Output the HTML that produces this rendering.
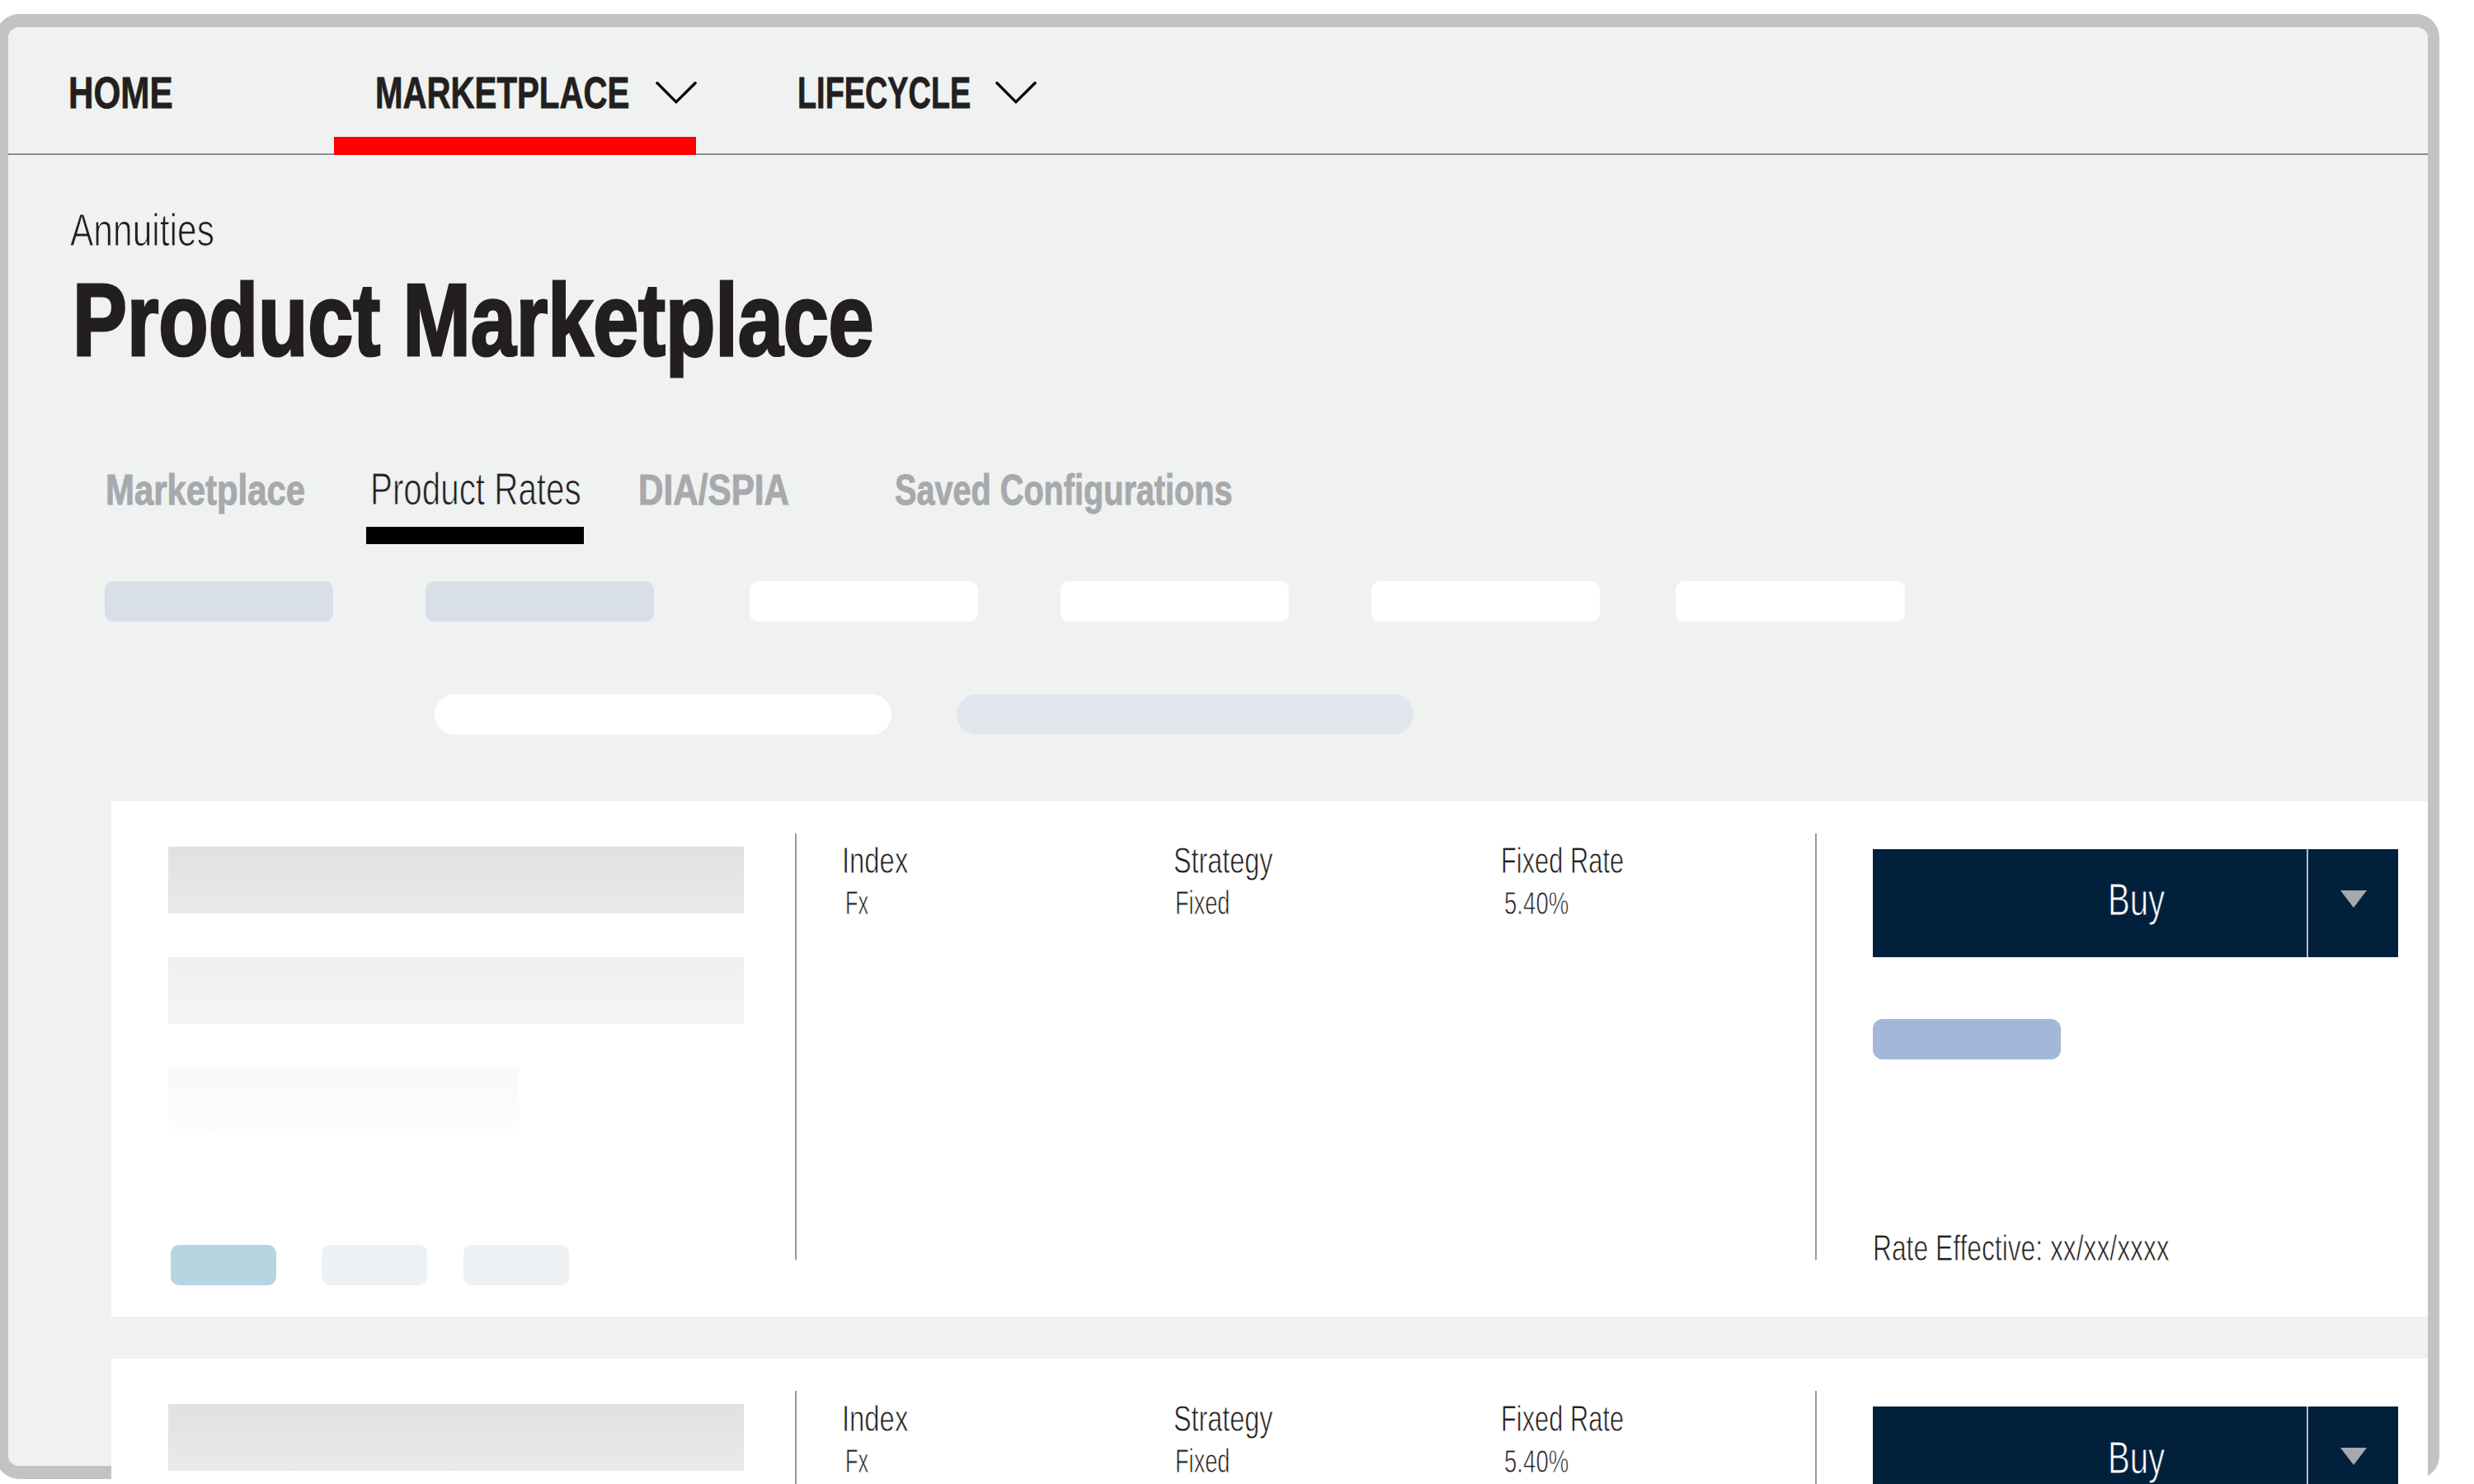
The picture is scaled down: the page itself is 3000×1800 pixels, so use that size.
<!DOCTYPE html>
<html>
<head>
<meta charset="utf-8">
<style>
html,body{margin:0;padding:0;}
body{width:3000px;height:1800px;position:relative;overflow:hidden;background:#ffffff;font-family:"Liberation Sans",sans-serif;color:#231f20;}
.a{position:absolute;}
.t{position:absolute;white-space:nowrap;line-height:1;transform-origin:0 0;}
.b{font-weight:bold;}
.frame{position:absolute;left:-5px;top:17px;width:2963px;height:1777px;box-sizing:border-box;border-style:solid;border-color:#c3c3c3;border-width:16px 14px 16px 15px;border-radius:28px;background:#f0f2f1;}
.card{position:absolute;left:135px;width:2809px;background:#ffffff;}
</style>
</head>
<body>
<div class="frame"></div>

<!-- top nav -->
<div class="a" style="left:10px;top:186px;width:2934px;height:2px;background:#8e8e8e;"></div>
<div class="a" style="left:405px;top:166px;width:439px;height:22px;background:#ff0000;"></div>
<div class="t b" style="left:82.64px;top:85.73px;font-size:53.50px;color:#231f20;transform:scaleX(0.7895);-webkit-text-stroke:0.80px #231f20;">HOME</div>
<div class="t b" style="left:455.14px;top:85.98px;font-size:53.50px;color:#231f20;transform:scaleX(0.7516);-webkit-text-stroke:0.80px #231f20;">MARKETPLACE</div>
<div class="t b" style="left:966.74px;top:85.61px;font-size:53.50px;color:#231f20;transform:scaleX(0.7073);-webkit-text-stroke:0.80px #231f20;">LIFECYCLE</div>
<svg class="a" style="left:785px;top:90px;" width="70" height="45" viewBox="0 0 70 45"><polygon points="9.9,11 11.2,8.9 12.9,9.3 34.9,31.5 57,9.3 58.7,8.9 60.2,11 34.9,36.1" fill="#000"/></svg>
<svg class="a" style="left:1197px;top:90px;" width="70" height="45" viewBox="0 0 70 45"><polygon points="9.9,11 11.2,8.9 12.9,9.3 34.9,31.5 57,9.3 58.7,8.9 60.2,11 34.9,36.1" fill="#000"/></svg>

<!-- heading -->
<div class="t" style="left:84.92px;top:252.37px;font-size:55.60px;color:#231f20;transform:scaleX(0.7648);-webkit-text-stroke:1.00px #f0f2f1;">Annuities</div>
<div class="t b" style="left:88.37px;top:325.53px;font-size:124.00px;color:#231f20;transform:scaleX(0.7965);-webkit-text-stroke:3.20px #231f20;">Product Marketplace</div>

<!-- tabs -->
<div class="t b" style="left:128.33px;top:567.77px;font-size:52.50px;color:#a7a9ac;transform:scaleX(0.7976);-webkit-text-stroke:1.00px #a7a9ac;">Marketplace</div>
<div class="t" style="left:448.95px;top:566.06px;font-size:55.40px;color:#231f20;transform:scaleX(0.7284);-webkit-text-stroke:1.00px #f0f2f1;">Product Rates</div>
<div class="t b" style="left:774.32px;top:567.55px;font-size:52.50px;color:#a7a9ac;transform:scaleX(0.8045);-webkit-text-stroke:1.00px #a7a9ac;">DIA/SPIA</div>
<div class="t b" style="left:1085.39px;top:567.70px;font-size:52.50px;color:#a7a9ac;transform:scaleX(0.7548);-webkit-text-stroke:1.00px #a7a9ac;">Saved Configurations</div>
<div class="a" style="left:444px;top:639px;width:264px;height:21px;background:#000000;"></div>

<!-- filter pills -->
<div class="a" style="left:127px;top:705px;width:277px;height:49px;border-radius:10px;background:#d9dfe8;"></div>
<div class="a" style="left:516px;top:705px;width:277px;height:49px;border-radius:10px;background:#d9dfe8;"></div>
<div class="a" style="left:909px;top:705px;width:277px;height:49px;border-radius:10px;background:#ffffff;"></div>
<div class="a" style="left:1286px;top:705px;width:277px;height:49px;border-radius:10px;background:#ffffff;"></div>
<div class="a" style="left:1663px;top:705px;width:277px;height:49px;border-radius:10px;background:#ffffff;"></div>
<div class="a" style="left:2032px;top:705px;width:278px;height:49px;border-radius:10px;background:#ffffff;"></div>
<div class="a" style="left:527px;top:842px;width:554px;height:49px;border-radius:25px;background:#ffffff;"></div>
<div class="a" style="left:1160px;top:842px;width:554px;height:49px;border-radius:25px;background:#e1e5ec;"></div>

<!-- card 1 -->
<div class="card" style="top:972px;height:625px;"></div>
<div class="a" style="left:204px;top:1027px;width:698px;height:81px;background:linear-gradient(#e0e1e2,#e8e9e9);"></div>
<div class="a" style="left:204px;top:1161px;width:698px;height:81px;background:linear-gradient(#eeefef,#f4f5f5);"></div>
<div class="a" style="left:204px;top:1295px;width:425px;height:80px;background:linear-gradient(#f9f9f9,#fdfdfd);"></div>
<div class="a" style="left:207px;top:1510px;width:128px;height:49px;border-radius:10px;background:#b5d6e0;"></div>
<div class="a" style="left:390px;top:1510px;width:128px;height:49px;border-radius:10px;background:#edf1f4;"></div>
<div class="a" style="left:562px;top:1510px;width:128px;height:49px;border-radius:10px;background:#edf1f4;"></div>
<div class="a" style="left:964px;top:1011px;width:2px;height:517px;background:#9a9a9a;"></div>
<div class="a" style="left:2201px;top:1011px;width:2px;height:517px;background:#9a9a9a;"></div>
<div class="t" style="left:1020.95px;top:1021.98px;font-size:44.10px;color:#231f20;transform:scaleX(0.7443);-webkit-text-stroke:0.80px #ffffff;">Index</div>
<div class="t" style="left:1422.94px;top:1022.60px;font-size:43.60px;color:#231f20;transform:scaleX(0.7421);-webkit-text-stroke:0.80px #ffffff;">Strategy</div>
<div class="t" style="left:1820.17px;top:1022.83px;font-size:43.60px;color:#231f20;transform:scaleX(0.7073);-webkit-text-stroke:0.80px #ffffff;">Fixed Rate</div>
<div class="t" style="left:1024.82px;top:1074.80px;font-size:40.40px;color:#231f20;transform:scaleX(0.6271);-webkit-text-stroke:0.80px #ffffff;">Fx</div>
<div class="t" style="left:1424.95px;top:1074.71px;font-size:40.60px;color:#231f20;transform:scaleX(0.6698);-webkit-text-stroke:0.80px #ffffff;">Fixed</div>
<div class="t" style="left:1823.92px;top:1076.65px;font-size:38.90px;color:#231f20;transform:scaleX(0.7099);-webkit-text-stroke:0.80px #ffffff;">5.40%</div>
<div class="a" style="left:2271px;top:1030px;width:637px;height:131px;background:#01203b;"></div>
<div class="a" style="left:2797px;top:1030px;width:2px;height:131px;background:rgba(255,255,255,0.7);"></div>
<svg class="a" style="left:2838px;top:1080px;" width="32" height="21" viewBox="0 0 32 21"><polygon points="0,0 32,0 16,21" fill="#a7a9ac"/></svg>
<div class="t" style="left:2555.76px;top:1064.37px;font-size:55.60px;color:#ffffff;transform:scaleX(0.7219);-webkit-text-stroke:1.00px #01203b;">Buy</div>
<div class="a" style="left:2271px;top:1236px;width:228px;height:49px;border-radius:12px;background:#a3b8d9;"></div>
<div class="t" style="left:2270.87px;top:1492.93px;font-size:43.60px;color:#231f20;transform:scaleX(0.7290);-webkit-text-stroke:0.80px #ffffff;">Rate Effective: xx/xx/xxxx</div>

<!-- card 2 -->
<div class="card" style="top:1648px;height:160px;"></div>
<div class="a" style="left:204px;top:1703px;width:698px;height:81px;background:linear-gradient(#e0e1e2,#e8e9e9);"></div>
<div class="a" style="left:964px;top:1687px;width:2px;height:200px;background:#9a9a9a;"></div>
<div class="a" style="left:2201px;top:1687px;width:2px;height:200px;background:#9a9a9a;"></div>
<div class="t" style="left:1020.95px;top:1698.98px;font-size:44.10px;color:#231f20;transform:scaleX(0.7443);-webkit-text-stroke:0.80px #ffffff;">Index</div>
<div class="t" style="left:1422.94px;top:1699.60px;font-size:43.60px;color:#231f20;transform:scaleX(0.7421);-webkit-text-stroke:0.80px #ffffff;">Strategy</div>
<div class="t" style="left:1820.17px;top:1699.83px;font-size:43.60px;color:#231f20;transform:scaleX(0.7073);-webkit-text-stroke:0.80px #ffffff;">Fixed Rate</div>
<div class="t" style="left:1024.82px;top:1751.80px;font-size:40.40px;color:#231f20;transform:scaleX(0.6271);-webkit-text-stroke:0.80px #ffffff;">Fx</div>
<div class="t" style="left:1424.95px;top:1751.71px;font-size:40.60px;color:#231f20;transform:scaleX(0.6698);-webkit-text-stroke:0.80px #ffffff;">Fixed</div>
<div class="t" style="left:1823.92px;top:1753.65px;font-size:38.90px;color:#231f20;transform:scaleX(0.7099);-webkit-text-stroke:0.80px #ffffff;">5.40%</div>
<div class="a" style="left:2271px;top:1706px;width:637px;height:131px;background:#01203b;"></div>
<div class="a" style="left:2797px;top:1706px;width:2px;height:131px;background:rgba(255,255,255,0.7);"></div>
<svg class="a" style="left:2838px;top:1756px;" width="32" height="21" viewBox="0 0 32 21"><polygon points="0,0 32,0 16,21" fill="#a7a9ac"/></svg>
<div class="t" style="left:2555.76px;top:1741.37px;font-size:55.60px;color:#ffffff;transform:scaleX(0.7219);-webkit-text-stroke:1.00px #01203b;">Buy</div>
</body>
</html>
